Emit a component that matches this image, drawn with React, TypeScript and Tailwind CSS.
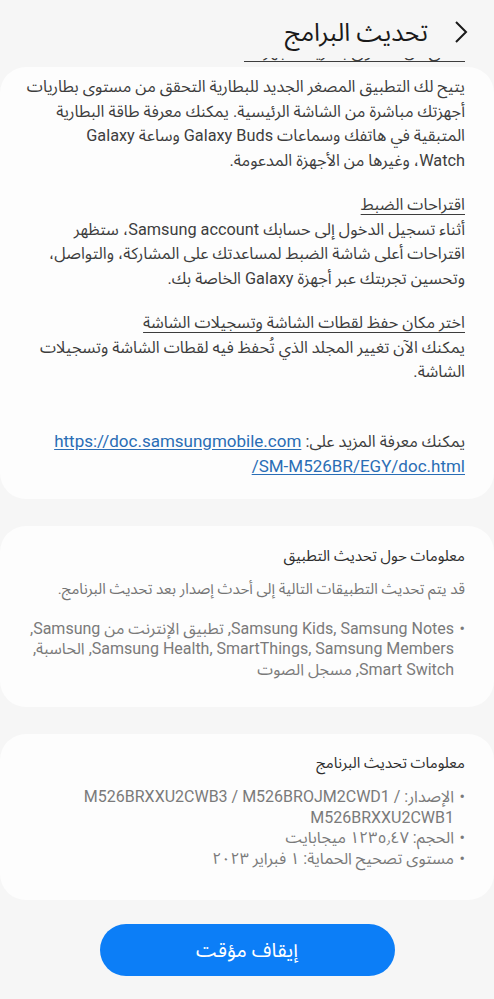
import React from 'react';

const font = { fontFamily: 'Roboto, "Noto Sans Arabic", "Noto Sans", "DejaVu Sans", sans-serif' };

const Bullet: React.FC<{ children: React.ReactNode }> = ({ children }) => (
  <div className="flex whitespace-nowrap">
    <span className="w-[11px] shrink-0 text-right">•</span>
    <span>{children}</span>
  </div>
);

const App: React.FC = () => {
  return (
    <div dir="rtl" style={font} className="min-h-[999px] w-[494px] overflow-hidden bg-[#f6f6f6] text-[#3d3d3d]">
      {/* header */}
      <div className="flex h-[58px] items-center pt-[6px] pr-[26px]">
        <svg width="14" height="24" viewBox="0 0 14 24" className="ml-[26px]">
          <polyline points="2,2 12,12 2,22" fill="none" stroke="#1a1a1a" strokeWidth="2" />
        </svg>
        <h1 className="text-[25px] leading-none text-[#1a1a1a]">تحديث البرامج</h1>
      </div>

      {/* heading scrolled mostly out of view */}
      <div className="h-[9px] overflow-hidden px-[29px]">
        <p className="-mt-[18px] whitespace-nowrap text-[16.3px] leading-[24.5px] underline underline-offset-4">
          تحقق من مستوى بطاريات أجهزتك
        </p>
      </div>

      {/* changelog card */}
      <div className="whitespace-nowrap rounded-[26px] bg-[#fdfdfd] px-[29px] pt-[8px] pb-[20px] text-[16.3px] leading-[24.5px]">
        <p className="mb-[20px]">
          يتيح لك التطبيق المصغر الجديد للبطارية التحقق من مستوى بطاريات<br />
          أجهزتك مباشرة من الشاشة الرئيسية. يمكنك معرفة طاقة البطارية<br />
          المتبقية في هاتفك وسماعات Galaxy Buds وساعة Galaxy<br />
          Watch، وغيرها من الأجهزة المدعومة.
        </p>
        <p className="underline underline-offset-4">اقتراحات الضبط</p>
        <p className="mb-[20px]">
          أثناء تسجيل الدخول إلى حسابك Samsung account، ستظهر<br />
          اقتراحات أعلى شاشة الضبط لمساعدتك على المشاركة، والتواصل،<br />
          وتحسين تجربتك عبر أجهزة Galaxy الخاصة بك.
        </p>
        <p className="underline underline-offset-4">اختر مكان حفظ لقطات الشاشة وتسجيلات الشاشة</p>
        <p className="mb-[44px]">
          يمكنك الآن تغيير المجلد الذي تُحفظ فيه لقطات الشاشة وتسجيلات<br />
          الشاشة.
        </p>
        <p className="text-[17px]">
          <span className="text-[16.3px]">يمكنك معرفة المزيد على:</span>{' '}
          <a href="#" className="text-[#2a6db5] underline underline-offset-2">
            <span dir="ltr">https://doc.samsungmobile.com</span>
            <br />
            <span dir="ltr">/SM-M526BR/EGY/doc.html</span>
          </a>
        </p>
      </div>

      {/* app update info */}
      <div className="mt-[27px] rounded-[26px] bg-[#fdfdfd] pt-[20px] pb-[27px] pr-[29px] pl-[20px]">
        <h2 className="text-[15px] leading-[20px] text-[#2e2e2e]">معلومات حول تحديث التطبيق</h2>
        <p className="mt-[13px] whitespace-nowrap text-[15px] leading-[20px] text-[#757575]">
          قد يتم تحديث التطبيقات التالية إلى أحدث إصدار بعد تحديث البرنامج.
        </p>
        <div className="mt-[20px] text-[16px] leading-[20.5px] text-[#7a7a7a]">
          <Bullet>
            Samsung Kids, Samsung Notes, تطبيق الإنترنت من Samsung,<br />
            Samsung Health, SmartThings, Samsung Members, الحاسبة,<br />
            Smart Switch, مسجل الصوت
          </Bullet>
        </div>
      </div>

      {/* software update info */}
      <div className="mt-[27px] rounded-[26px] bg-[#fdfdfd] pt-[19px] pb-[30px] pr-[29px] pl-[20px]">
        <h2 className="text-[15px] leading-[20px] text-[#2e2e2e]">معلومات تحديث البرنامج</h2>
        <div className="mt-[14px] text-[16px] leading-[20.7px] text-[#7a7a7a]">
          <Bullet>
            الإصدار: <bdi dir="ltr">M526BRXXU2CWB3 / M526BROJM2CWD1 /</bdi>
            <br />
            <bdi dir="ltr">M526BRXXU2CWB1</bdi>
          </Bullet>
          <Bullet>الحجم: ١٢٣٥٫٤٧ ميجابايت</Bullet>
          <Bullet>مستوى تصحيح الحماية: ١ فبراير ٢٠٢٣</Bullet>
        </div>
      </div>

      {/* pause button */}
      <div className="flex justify-center pt-[24px] pb-[25px]">
        <button className="h-[52px] w-[295px] rounded-full bg-[#0c7ef7] text-[20px] text-white">
          إيقاف مؤقت
        </button>
      </div>
    </div>
  );
};

export default App;
